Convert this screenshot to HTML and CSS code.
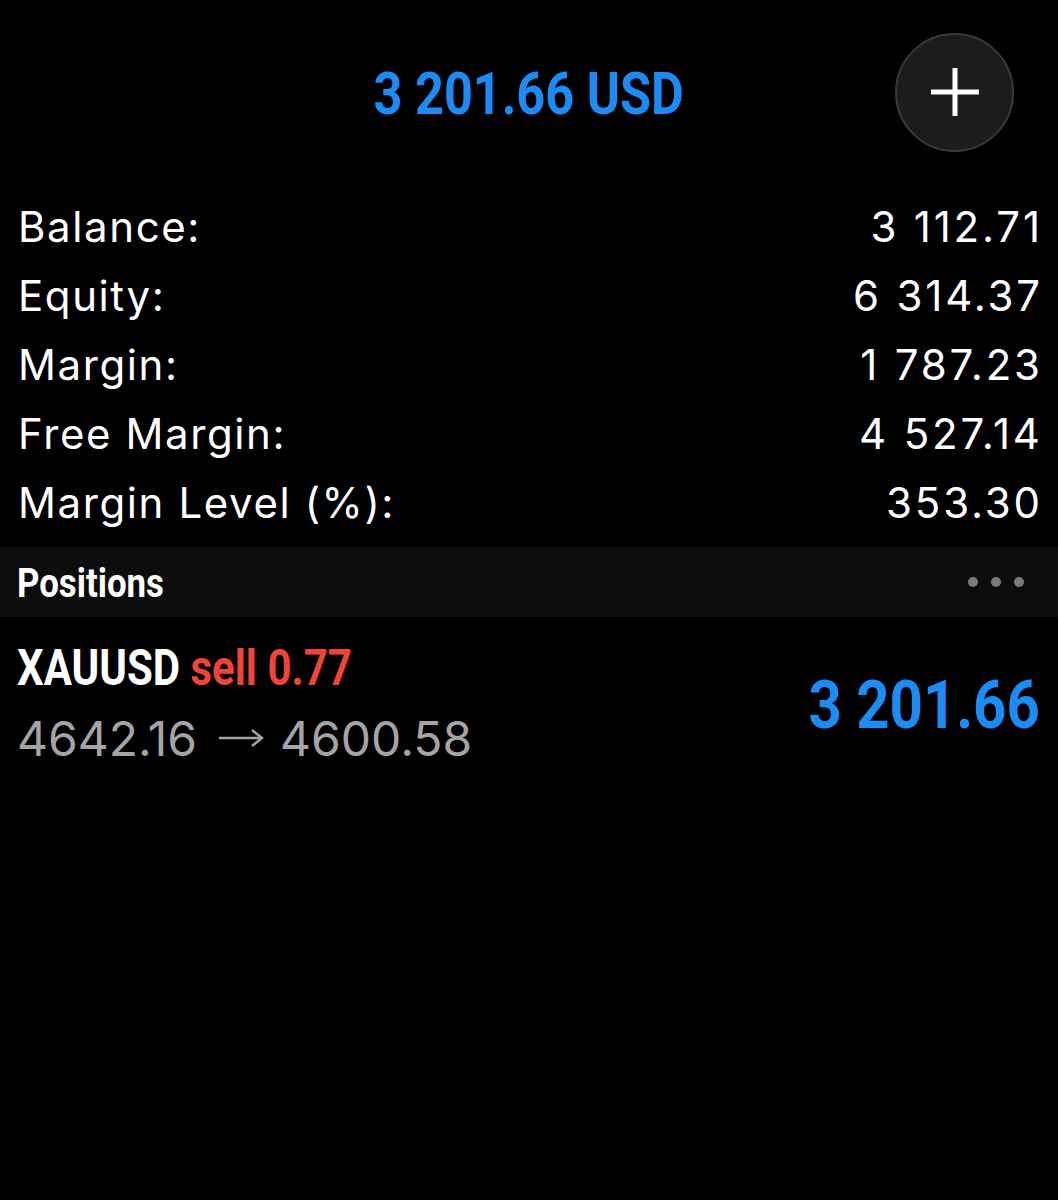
FILE: index.html
```html
<!DOCTYPE html>
<html lang="en">
<head>
    <meta charset="UTF-8">
    <meta name="viewport" content="width=device-width, initial-scale=1.0">
    <title>Trade</title>
    <link rel="stylesheet" href="styles.css">
</head>
<body>
    <div class="header">
        <div></div>
        <div class="title"><span class="cond">3 201.66 USD</span></div>
        <div class="add-wrap">
            <button class="add">
                <svg width="50" height="50" viewBox="0 0 50 50">
                    <path d="M25 1 V49 M1 25 H49" stroke="#fff" stroke-width="5"/>
                </svg>
            </button>
        </div>
    </div>

    <div class="stats">
        <div class="row"><span>Balance:</span><span class="num">3 112.71</span></div>
        <div class="row"><span>Equity:</span><span class="num">6 314.37</span></div>
        <div class="row"><span>Margin:</span><span class="num">1 787.23</span></div>
        <div class="row"><span>Free Margin:</span><span class="num">4 527.14</span></div>
        <div class="row"><span>Margin Level (%):</span><span class="num">353.30</span></div>
    </div>

    <div class="section">
        <span class="section-title"><span class="cond">Positions</span></span>
        <span class="dots"><i></i><i></i><i></i></span>
    </div>

    <div class="position">
        <div class="pos-left">
            <div class="symbol"><span class="cond">XAUUSD <span class="sell">sell 0.77</span></span></div>
            <div class="prices">4642.16<svg class="arrow" width="46" height="20" viewBox="0 0 46 20"><path d="M1 10 H44 M34 2 L44 10 L34 18" fill="none" stroke="#a4a4a4" stroke-width="2.4"/></svg>4600.58</div>
        </div>
        <div class="profit"><span class="cond">3 201.66</span></div>
    </div>
</body>
</html>
```

FILE: styles.css
```css
body {
    margin: 0;
    background: #000;
    color: #fff;
    font-family: Inter, "Liberation Sans", sans-serif;
}
.cond {
    display: inline-block;
    font-family: Roboto, "Liberation Sans", sans-serif;
    font-weight: 700;
    transform: scaleX(0.84);
    white-space: nowrap;
}
.header {
    display: grid;
    grid-template-columns: 1fr auto 1fr;
    align-items: center;
    height: 184px;
}
.title {
    color: #1b8cf5;
    font-size: 60px;
    text-align: center;
}
.add-wrap {
    display: flex;
    justify-content: flex-end;
    padding-right: 44px;
}
.add {
    width: 119px;
    height: 119px;
    border-radius: 50%;
    background: #1c1c1c;
    border: 2px solid #3a3a3a;
    display: flex;
    align-items: center;
    justify-content: center;
    padding: 0;
}
.stats {
    padding: 8px 18px 10px;
}
.row {
    display: flex;
    justify-content: space-between;
    align-items: center;
    height: 69px;
    font-size: 42px;
    letter-spacing: 1.6px;
}
.row .num {
    letter-spacing: 2.8px;
    margin-right: -2.8px;
}
.section {
    display: flex;
    justify-content: space-between;
    align-items: center;
    height: 70px;
    background: #0c0c0c;
    padding: 0 34px 0 17px;
}
.section-title {
    font-size: 40px;
}
.section-title .cond {
    transform: scaleX(0.87);
}
.section-title .cond,
.symbol .cond {
    transform-origin: left center;
}
.dots {
    display: flex;
    gap: 13px;
}
.dots i {
    width: 10px;
    height: 10px;
    border-radius: 50%;
    background: #7a7a7a;
}
.position {
    display: flex;
    justify-content: space-between;
    align-items: center;
    padding: 22px 18px 0 17px;
}
.symbol {
    font-size: 50px;
    line-height: 56px;
}
.sell {
    color: #f04536;
}
.prices {
    color: #a4a4a4;
    font-size: 48px;
    line-height: 58px;
    margin-top: 14px;
}
.arrow {
    margin: 0 16px 0 21px;
    vertical-align: 8px;
}
.profit {
    color: #1b8cf5;
    font-size: 66px;
}
.profit .cond {
    transform: scaleX(0.88);
    transform-origin: right center;
}
```
